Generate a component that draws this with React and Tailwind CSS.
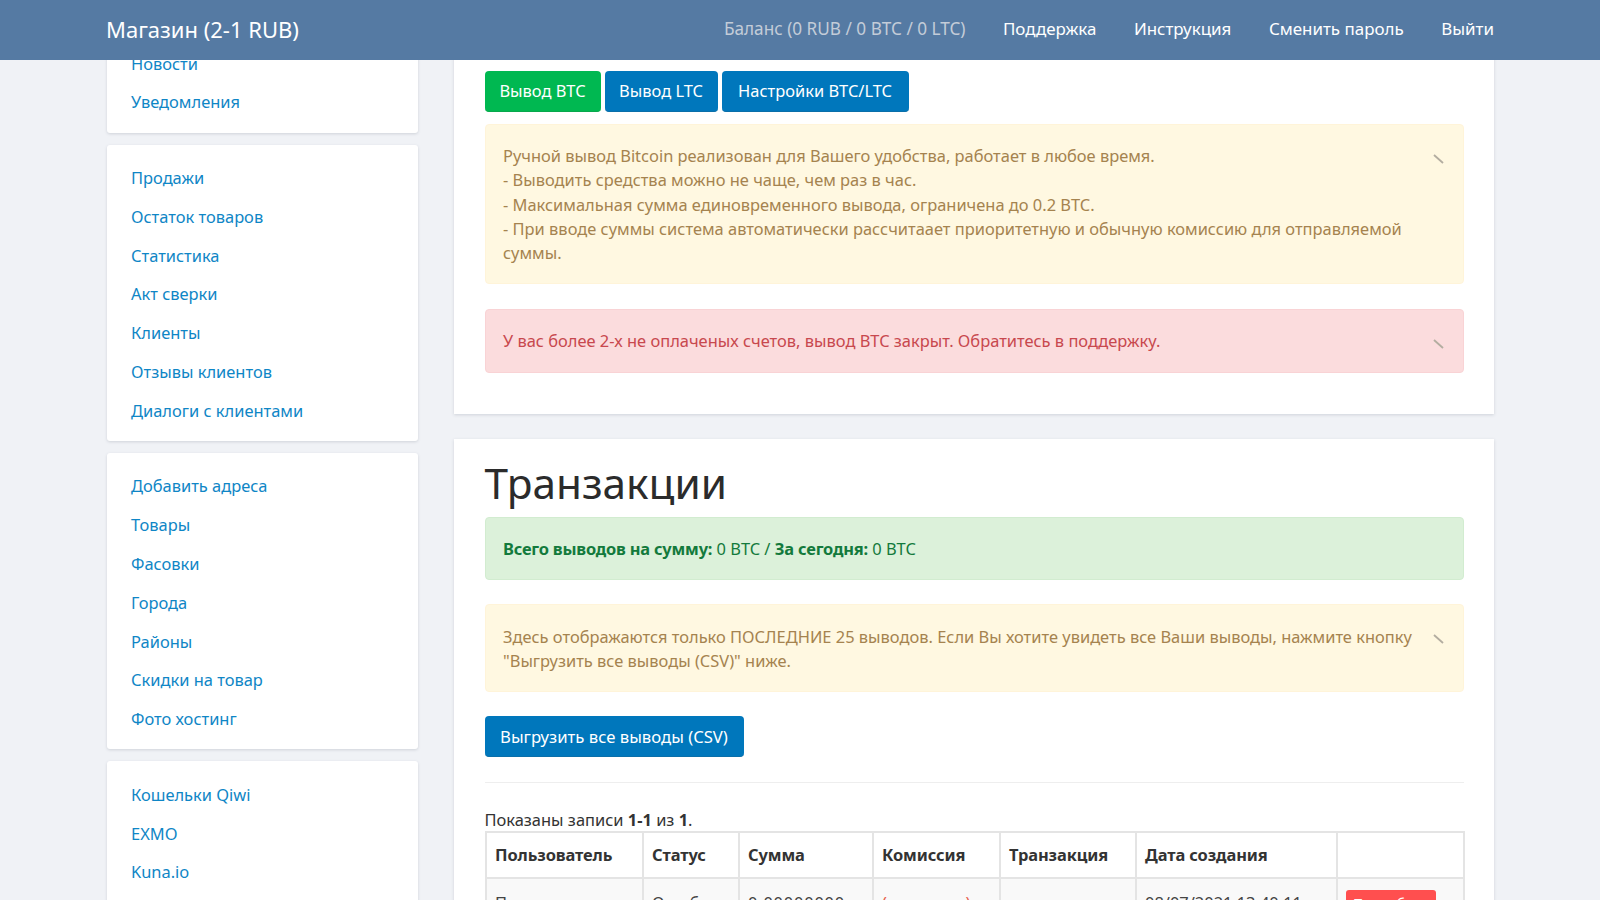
const menus = [
  { items: ["Новости", "Уведомления"] },
  { items: ["Продажи", "Остаток товаров", "Статистика", "Акт сверки", "Клиенты", "Отзывы клиентов", "Диалоги с клиентами"] },
  { items: ["Добавить адреса", "Товары", "Фасовки", "Города", "Районы", "Скидки на товар", "Фото хостинг"] },
  { items: ["Кошельки Qiwi", "EXMO", "Kuna.io"] },
];

function Close() {
  return (
    <svg className="absolute right-[18px] top-[29px]" width="12" height="10" viewBox="0 0 12 10">
      <path d="M1 1 L10 9" stroke="#b3ada0" strokeWidth="1.8" />
    </svg>
  );
}

function Alert({ tone, close = true, children, className = "" }) {
  const tones = {
    warn: "bg-[#fff8e1] border-[#fff4d9] text-[#a5834f]",
    danger: "bg-[#fbdcdd] border-[#f9d3d5] text-[#c8484e]",
    ok: "bg-[#dcf1da] border-[#d2ecd0] text-[#137a3c]",
  };
  return (
    <div className={"relative border rounded-[4px] pl-[17.5px] pt-[19px] pb-[18px] pr-[50px] leading-[24.25px] " + tones[tone] + " " + className}>
      {children}
      {close && <Close />}
    </div>
  );
}

function Btn({ children, color = "bg-[#0077bc] border-[#0a6fa9]", className = "" }) {
  return (
    <button className={"h-[41px] rounded-[4px] border-b text-white whitespace-nowrap " + color + " " + className}>
      {children}
    </button>
  );
}

const th = "border-2 border-[#e4e4e4] px-[8.5px] text-left font-bold text-[#333] tracking-[-0.1px] h-[46px]";
const td = "border-2 border-[#e4e4e4] px-[8.5px] pt-[12px] pb-[10px] align-top whitespace-nowrap";

export default function App() {
  return (
    <div className="h-[900px] overflow-hidden bg-[#f0f2f6] flex flex-col text-[16.45px] font-['Noto_Sans',sans-serif]">
      <header className="h-[60px] shrink-0 bg-[#557aa3] z-10">
        <div className="w-[1388px] mx-auto h-full flex items-center pb-[2px] text-white">
          <div className="text-[22px]">Магазин (2-1 RUB)</div>
          <nav className="ml-auto flex items-center gap-[37.5px] text-[16.95px]">
            <span className="text-[#c3ccd8] text-[17.2px]">Баланс (0 RUB / 0 BTC / 0 LTC)</span>
            <span>Поддержка</span>
            <span>Инструкция</span>
            <span>Сменить пароль</span>
            <span>Выйти</span>
          </nav>
        </div>
      </header>

      <div className="flex-1 overflow-hidden">
        <div className="w-[1388px] mx-auto -mt-[30px] flex items-start gap-[36px]">
          <aside className="w-[311px] ml-[1px] shrink-0 flex flex-col gap-[12px]">
            {menus.map((m, i) => (
              <div key={i} className="bg-white rounded-[3px] shadow-[0_1px_3px_rgba(60,70,90,0.18)] pl-[24px] pr-[20px] pt-[14.5px] pb-[10.5px]">
                {m.items.map((t) => (
                  <div key={t} className="h-[38.78px] flex items-center text-[#0f86c6]">{t}</div>
                ))}
              </div>
            ))}
          </aside>

          <main className="flex-1 min-w-0 flex flex-col gap-[25px]">
            <section className="bg-white shadow-[0_1px_3px_rgba(60,70,90,0.18)] pl-[30.5px] pr-[30px] pt-[41px] pb-[41px]">
              <div className="flex gap-[4px]">
                <Btn color="bg-[#00b851] border-[#08a84c]" className="w-[116px]">Вывод BTC</Btn>
                <Btn className="w-[113px]">Вывод LTC</Btn>
                <Btn className="w-[187px]">Настройки BTC/LTC</Btn>
              </div>
              <Alert tone="warn" className="mt-[12px]">
                Ручной вывод Bitcoin реализован для Вашего удобства, работает в любое время.<br />
                - Выводить средства можно не чаще, чем раз в час.<br />
                - Максимальная сумма единовременного вывода, ограничена до 0.2 BTC.<br />
                - При вводе суммы система автоматически рассчитаает приоритетную и обычную комиссию для отправляемой суммы.
              </Alert>
              <Alert tone="danger" className="mt-[25px]">
                У вас более 2-х не оплаченых счетов, вывод BTC закрыт. Обратитесь в поддержку.
              </Alert>
            </section>

            <section className="bg-white shadow-[0_1px_3px_rgba(60,70,90,0.18)] pl-[30.5px] pr-[30px] pt-[16px] pb-[30px]">
              <h1 className="text-[42.3px] leading-[56px] text-[#2b2b2b] mb-[6px]">Транзакции</h1>
              <Alert tone="ok" close={false}>
                <b className="tracking-[-0.2px]">Всего выводов на сумму:</b> 0 BTC / <b className="tracking-[-0.2px]">За сегодня:</b> 0 BTC
              </Alert>
              <Alert tone="warn" className="mt-[24px] pt-[20px]">
                Здесь отображаются только ПОСЛЕДНИЕ 25 выводов. Если Вы хотите увидеть все Ваши выводы, нажмите кнопку "Выгрузить все выводы (CSV)" ниже.
              </Alert>
              <Btn className="w-[259px] mt-[24px] block text-[16.7px]">Выгрузить все выводы (CSV)</Btn>
              <hr className="mt-[25px] border-t border-[#eeeeee]" />
              <div className="mt-[25px] leading-[23px] text-[#333]">
                Показаны записи <b>1-1</b> из <b>1</b>.
              </div>
              <table className="w-full table-fixed border-collapse">
                <colgroup>
                  <col className="w-[157px]" />
                  <col className="w-[96px]" />
                  <col className="w-[134px]" />
                  <col className="w-[127px]" />
                  <col className="w-[136px]" />
                  <col className="w-[201px]" />
                  <col className="w-[127px]" />
                </colgroup>
                <thead>
                  <tr>
                    <th className={th}>Пользователь</th>
                    <th className={th}>Статус</th>
                    <th className={th}>Сумма</th>
                    <th className={th}>Комиссия</th>
                    <th className={th}>Транзакция</th>
                    <th className={th}>Дата создания</th>
                    <th className={th}></th>
                  </tr>
                </thead>
                <tbody>
                  <tr className="bg-[#f9f9f9] text-[#444]">
                    <td className={td}>Простаки</td>
                    <td className={td}>Ошибка</td>
                    <td className={td + " tracking-[0.8px]"}>0.00000000</td>
                    <td className={td + " !text-[#e8604c]"}>(не оплата)</td>
                    <td className={td}></td>
                    <td className={td}>08/07/2021 13:40:11</td>
                    <td className={td + " !pt-[11px]"}>
                      <button className="block w-[90px] h-[34px] pb-[7px] rounded-[3px] bg-[#ff4f4f] text-white text-[14px]">Подробнее</button>
                    </td>
                  </tr>
                </tbody>
              </table>
            </section>
          </main>
        </div>
      </div>
    </div>
  );
}
